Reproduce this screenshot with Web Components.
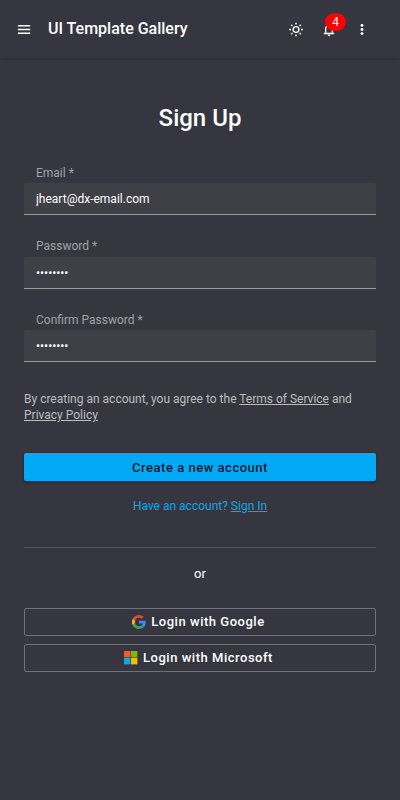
<!DOCTYPE html>
<html lang="en">
<head>
<meta charset="utf-8">
<title>UI Template Gallery</title>
<style>
html, body { margin: 0; height: 100%; background: #363640; }
body { font-family: Roboto, "Liberation Sans", sans-serif; font-size: 12px; color: #fff; }
</style>
</head>
<body>
<app-shell></app-shell>
<script>
function define(name, html) {
  const template = document.createElement('template');
  template.innerHTML = html;
  customElements.define(name, class extends HTMLElement {
    constructor() {
      super();
      this.attachShadow({ mode: 'open' }).append(template.content.cloneNode(true));
    }
    connectedCallback() {
      for (const el of this.shadowRoot.querySelectorAll('[data-from]')) {
        const value = this.getAttribute(el.dataset.from) || '';
        if (el.localName === 'input') {
          el.type = this.getAttribute('type') || 'text';
          el.value = value;
        } else {
          el.textContent = value;
        }
      }
    }
  });
}

define('app-toolbar', `
<style>
:host { display: flex; align-items: center; box-sizing: border-box; height: 58px; padding: 0 22px 0 16px; background: #363640; box-shadow: 0 1px 4px rgba(0,0,0,.18); }
svg { display: block; width: 16px; height: 16px; fill: #fff; }
h1 { margin: 0 auto 0 16px; font: 500 16px/24px Roboto, sans-serif; }
.actions { display: flex; gap: 17px; padding-right: 8px; }
.actions svg { transform: translateY(.5px); }
.bell { position: relative; }
.badge { position: absolute; left: 4px; top: -8px; width: 21px; height: 18px; border-radius: 9px; background: #f00; font-size: 12px; line-height: 18px; text-align: center; }
</style>
<svg viewBox="0 0 16 16"><path d="M1.900 4h12.300v1.500H1.900zM1.900 7.800h12.300v1.400H1.900zM1.900 11.600h12.300v1.500H1.900z"/></svg>
<h1>UI Template Gallery</h1>
<div class="actions">
<svg viewBox="0 0 16 16"><circle cx="8" cy="8" r="2.9" fill="none" stroke="#fff" stroke-width="1.4"/><path d="M8 1.200v1.800M8 13v1.800M1.200 8h1.800M13 8h1.800M3.2 3.2l1.2 1.2M11.6 11.6l1.2 1.2M3.2 12.8l1.2-1.2M11.6 4.4l1.2-1.2" stroke="#fff" stroke-width="1.4"/></svg>
<div class="bell"><svg viewBox="0 0 24 24"><path d="M12 22a2 2 0 0 0 2-2h-4a2 2 0 0 0 2 2m6-6v-5c0-3.1-1.6-5.6-4.500-6.300V4a1.500 1.500 0 0 0-3 0v.7C7.600 5.400 6 7.900 6 11v5l-2 2v1h16v-1zm-2 1H8v-6c0-2.500 1.500-4.500 4-4.500s4 2 4 4.500z"/></svg><span class="badge">4</span></div>
<svg viewBox="0 0 16 16"><circle cx="8" cy="3.900" r="1.450"/><circle cx="8" cy="8" r="1.450"/><circle cx="8" cy="12.100" r="1.450"/></svg>
</div>`);

define('text-field', `
<style>
:host { display: block; }
label { display: block; height: var(--label-height, 18px); padding-left: 12px; font-size: 12px; line-height: 16px; color: #a1a1a6; }
input { display: block; box-sizing: border-box; width: 100%; height: 32px; margin: 0 0 23px; padding: 0 12px; border: 0; border-bottom: 1px solid #9b9b9f; border-radius: 2px 2px 0 0; outline: 0; background: #3f3f48; color: #fff; font: 12px Roboto, sans-serif; }
</style>
<label data-from="label"></label><input data-from="value">`);

define('action-button', `
<style>
:host { display: flex; align-items: center; justify-content: center; gap: 5px; box-sizing: border-box; height: 28px; padding-right: 3px; border: 1px solid #71717a; border-radius: 2px; font: 500 13px/26px Roboto, sans-serif; letter-spacing: .52px; }
:host([primary]) { padding: 1px 0 0; border: 0; background: #03a9f4; color: rgba(0,0,0,.87); box-shadow: 0 1px 3px rgba(0,0,0,.4); line-height: 27px; }
</style>
<slot name="icon"></slot><span><slot></slot></span>`);

define('brand-icon', `
<style>:host { display: block; height: 14px; } ::slotted(svg) { display: block; width: 14px; height: 14px; }</style><slot></slot>`);

define('sign-up-form', `
<style>
:host { display: block; padding: 44px 24px 0; }
h2 { margin: 0 0 31px; font: 500 24px/32px Roboto, sans-serif; text-align: center; }
.second { --label-height: 19px; }
.terms { margin: 29px 0 30px; color: #bcbcbf; line-height: 16px; }
.signin { margin: 17px 0 33px; line-height: 16px; text-align: center; color: #03a9f4; }
.or { border-top: 1px solid #54545c; padding: 18px 0 26px; text-align: center; font-size: 13px; line-height: 16px; }
.logins { display: grid; gap: 8px; }
</style>
<h2>Sign Up</h2>
<text-field label="Email *" value="jheart@dx-email.com"></text-field>
<text-field class="second" label="Password *" type="password" value="password"></text-field>
<text-field label="Confirm Password *" type="password" value="password"></text-field>
<div class="terms">By creating an account, you agree to the <u>Terms of Service</u> and <u>Privacy Policy</u></div>
<action-button primary>Create a new account</action-button>
<div class="signin">Have an account? <u>Sign In</u></div>
<div class="or">or</div>
<div class="logins">
<action-button><brand-icon slot="icon"><svg viewBox="0 0 48 48"><path fill="#ea4335" d="M24 9.500c3.540 0 6.710 1.220 9.210 3.600l6.850-6.850C35.900 2.380 30.470 0 24 0 14.620 0 6.510 5.380 2.560 13.220l7.980 6.190C12.430 13.720 17.740 9.500 24 9.500z"/><path fill="#4285f4" d="M46.980 24.550c0-1.570-.15-3.090-.38-4.550H24v9.020h12.940c-.58 2.960-2.260 5.480-4.780 7.180l7.730 6c4.510-4.180 7.090-10.360 7.090-17.650z"/><path fill="#fbbc05" d="M10.530 28.590c-.48-1.450-.76-2.990-.76-4.590s.27-3.140.76-4.590l-7.980-6.190C.92 16.460 0 20.120 0 24s.92 7.540 2.560 10.780z"/><path fill="#34a853" d="M24 48c6.480 0 11.930-2.130 15.890-5.810l-7.730-6c-2.150 1.450-4.920 2.300-8.160 2.300-6.260 0-11.570-4.220-13.470-9.910l-7.980 6.190C6.510 42.620 14.620 48 24 48z"/></svg></brand-icon>Login with Google</action-button>
<action-button><brand-icon slot="icon"><svg viewBox="0 0 14 14"><path fill="#ff5722" d="M0 0h6.400v6.400H0z"/><path fill="#7cb900" d="M7 0h6.400v6.400H7z"/><path fill="#03a9f4" d="M0 7h6.400v6.400H0z"/><path fill="#ffba00" d="M7 7h6.400v6.400H7z"/></svg></brand-icon>Login with Microsoft</action-button>
</div>`);

define('app-shell', `
<style>:host { display: block; }</style>
<app-toolbar></app-toolbar><sign-up-form></sign-up-form>`);
</script>
</body>
</html>
